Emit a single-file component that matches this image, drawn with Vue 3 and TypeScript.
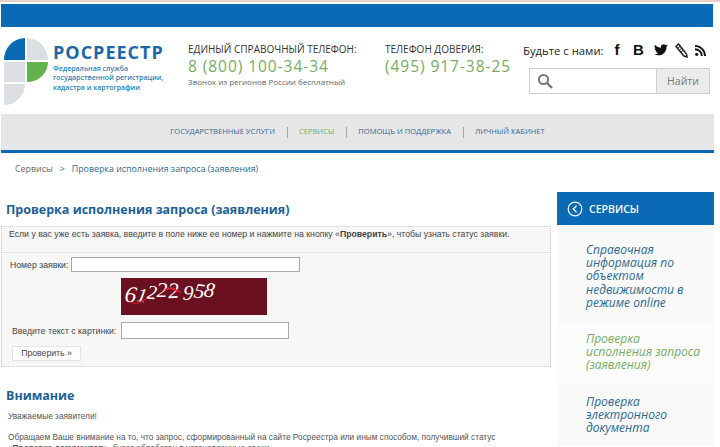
<template>
  <div class="page">
    <div class="top-line"></div>
    <div class="top-bar"></div>

    <header class="header">
      <div class="logo">
        <svg class="logo-mark" width="44" height="67" viewBox="0 0 44 67">
          <path d="M0 22 A21 22 0 0 1 21 0 V22 Z" fill="#0b6ab5" />
          <path d="M23 0 A21 22 0 0 1 44 22 H23 Z" fill="#dcdfe2" />
          <rect x="0" y="24" width="21" height="20" fill="#dcdfe2" />
          <path d="M23 24 H44 A21 20 0 0 1 23 44 Z" fill="#62b34d" />
          <path d="M0 46 H21 A21 21 0 0 1 0 67 Z" fill="#dcdfe2" />
        </svg>
        <div class="logo-text">
          <div class="logo-name">РОСРЕЕСТР</div>
          <div class="logo-sub">Федеральная служба<br />государственной регистрации,<br />кадастра и картографии</div>
        </div>
      </div>

      <div class="phone phone-main">
        <div class="phone-title">ЕДИНЫЙ СПРАВОЧНЫЙ ТЕЛЕФОН:</div>
        <div class="phone-num">8 (800) 100-34-34</div>
        <div class="phone-note">Звонок из регионов России бесплатный</div>
      </div>

      <div class="phone phone-trust">
        <div class="phone-title">ТЕЛЕФОН ДОВЕРИЯ:</div>
        <div class="phone-num">(495) 917-38-25</div>
      </div>

      <div class="header-right">
        <div class="social">
          <span class="social-label">Будьте с нами:</span>
          <span class="soc-letter soc-f">f</span>
          <span class="soc-letter soc-b">B</span>
          <svg width="14" height="12" viewBox="0 0 24 20">
            <path d="M24 2.4c-.9.4-1.8.7-2.8.8 1-.6 1.8-1.6 2.2-2.7-1 .6-2 1-3.100 1.200C19.300.7 18 0 16.600 0c-2.700 0-4.900 2.200-4.900 4.900 0 .4 0 .8.100 1.100C7.700 5.800 4.100 3.900 1.700.9c-.4.700-.7 1.600-.7 2.500 0 1.700.9 3.200 2.200 4.100-.8 0-1.600-.2-2.200-.6v.1c0 2.400 1.700 4.400 3.900 4.800-.4.100-.8.200-1.300.2-.3 0-.6 0-.9-.1.600 2 2.400 3.400 4.600 3.400-1.700 1.300-3.800 2.100-6.100 2.100-.4 0-.8 0-1.200-.1C2.200 18.300 4.800 19.100 7.500 19.100c9.100 0 14-7.500 14-14v-.6c1-.7 1.800-1.500 2.500-2.100z" fill="#111" />
          </svg>
          <svg width="13" height="15" viewBox="0 0 13 15">
            <path d="M1 3.500 3.500 1 11.500 11 12 14 9 13Z" fill="none" stroke="#222" stroke-width="1.500" />
            <path d="M3 5 5.500 3M4.500 7 7 5M6 9 8.500 7" stroke="#222" stroke-width="1" />
          </svg>
          <svg width="11" height="11" viewBox="0 0 11 11">
            <circle cx="1.700" cy="9.300" r="1.600" fill="#111" />
            <path d="M0 4.200A6.800 6.800 0 0 1 6.800 11M0 .9A10.100 10.100 0 0 1 10.100 11" fill="none" stroke="#111" stroke-width="1.900" />
          </svg>
        </div>
        <div class="search">
          <div class="search-field">
            <svg width="16" height="16" viewBox="0 0 16 16">
              <circle cx="6.500" cy="6.500" r="4.600" fill="none" stroke="#777" stroke-width="2" />
              <path d="M10 10 15 15" stroke="#777" stroke-width="2.400" />
            </svg>
          </div>
          <div class="search-btn">Найти</div>
        </div>
      </div>
    </header>

    <nav class="nav">
      <a class="nav-link">ГОСУДАРСТВЕННЫЕ УСЛУГИ</a>
      <span class="nav-sep"></span>
      <a class="nav-link nav-active">СЕРВИСЫ</a>
      <span class="nav-sep"></span>
      <a class="nav-link">ПОМОЩЬ И ПОДДЕРЖКА</a>
      <span class="nav-sep"></span>
      <a class="nav-link">ЛИЧНЫЙ КАБИНЕТ</a>
    </nav>

    <div class="crumbs">
      <span class="crumb-root">Сервисы</span>
      <span class="crumb-arrow">&gt;</span>
      <span class="crumb-cur">Проверка исполнения запроса (заявления)</span>
    </div>

    <div class="columns">
      <main class="content">
        <h1 class="title">Проверка исполнения запроса (заявления)</h1>
        <div class="form-box">
          <div class="form-hint">
            Если у вас уже есть заявка, введите в поле ниже ее номер и нажмите на кнопку «<b>Проверить</b>», чтобы узнать статус заявки.
          </div>
          <div class="form-body">
            <div class="row row-num">
              <label class="lbl">Номер заявки:</label>
              <div class="inp inp-num"></div>
            </div>
            <div class="captcha">
              <span v-for="d in digits" :key="d.id" class="digit" :style="{ transform: `translateY(${d.y}px) rotate(${d.r}deg)`, fontSize: d.s + 'px' }">{{ d.c }}</span>
              <svg class="captcha-noise" width="146" height="37" viewBox="0 0 146 37">
                <path d="M44 12 Q50 8 56 13 L60 14" fill="none" stroke="#e0202c" stroke-width="1.800" />
                <path d="M8 24 Q16 28 26 20" fill="none" stroke="#c4182a" stroke-width="1.200" />
              </svg>
            </div>
            <div class="row row-code">
              <label class="lbl">Введите текст с картинки:</label>
              <div class="inp inp-code"></div>
            </div>
            <div class="check-btn">Проверить »</div>
          </div>
        </div>

        <h2 class="title title-sm">Внимание</h2>
        <p class="txt">Уважаемые заявители!</p>
        <p class="txt">Обращаем Ваше внимание на то, что запрос, сформированный на сайте Росреестра или иным способом, получивший статус<br /><b>«Проверка документов»</b>, будет обработан в установленные сроки.</p>
      </main>

      <aside class="side">
        <div class="side-head">
          <svg width="16" height="16" viewBox="0 0 16 16">
            <circle cx="8" cy="8" r="6.800" fill="none" stroke="#fff" stroke-width="1.200" />
            <path d="M9.500 4.800 6.300 8 9.500 11.200" fill="none" stroke="#fff" stroke-width="1.400" />
          </svg>
          <span>СЕРВИСЫ</span>
        </div>
        <a class="side-item side-1">Справочная информация по объектом недвижимости в режиме online</a>
        <a class="side-item side-2 side-active">Проверка исполнения запроса (заявления)</a>
        <a class="side-item side-3">Проверка электронного документа</a>
      </aside>
    </div>
  </div>
</template>

<script setup lang="ts">
interface Digit {
  id: number;
  c: string;
  y: number;
  r: number;
  s: number;
}

const digits: Digit[] = [
  { id: 1, c: "6", y: 2, r: 8, s: 23 },
  { id: 2, c: "1", y: 3, r: 10, s: 20 },
  { id: 3, c: "2", y: 0, r: 6, s: 20 },
  { id: 4, c: "2", y: -3, r: 0, s: 22 },
  { id: 5, c: "2", y: -2, r: -4, s: 22 },
  { id: 6, c: " ", y: 0, r: 0, s: 18 },
  { id: 7, c: "9", y: 1, r: 4, s: 21 },
  { id: 8, c: "5", y: -1, r: 8, s: 21 },
  { id: 9, c: "8", y: -2, r: 8, s: 21 },
];
</script>

<style>
html,
body {
  margin: 0;
  background: #fff;
  overflow: hidden;
}
</style>

<style scoped>
.page {
  width: 720px;
  height: 447px;
  overflow: hidden;
  background: #fff;
  font-family: "Open Sans", sans-serif;
  color: #444;
}

.top-line {
  height: 2px;
  background: #e9cfc9;
  margin-bottom: 2px;
}

.top-bar {
  height: 23px;
  margin: 0 7px 0 1px;
  background: #0b6ab5;
}

.header {
  display: flex;
  height: 87px;
  width: 714px;
}

.logo {
  display: flex;
  width: 188px;
  padding: 11px 0 0 4px;
  box-sizing: border-box;
}

.logo-mark {
  flex: none;
}

.logo-text {
  margin-left: 5px;
}

.logo-name {
  margin-top: 3px;
  font-size: 18px;
  line-height: 22px;
  font-weight: 700;
  letter-spacing: 1px;
  color: #1a68a8;
}

.logo-sub {
  margin-top: 1px;
  font-size: 7px;
  line-height: 9.300px;
  font-weight: 600;
  color: #2d7fb5;
  white-space: nowrap;
}

.phone {
  padding-top: 15px;
}

.phone-main {
  width: 197px;
}

.phone-trust {
  width: 138px;
}

.phone-title {
  font-size: 10px;
  line-height: 14px;
  color: #333;
  white-space: nowrap;
}

.phone-num {
  font-size: 15.500px;
  line-height: 21px;
  letter-spacing: 0.950px;
  color: #74ad63;
  white-space: nowrap;
}

.phone-note {
  margin-top: -1px;
  font-size: 8px;
  line-height: 11px;
  color: #666;
  white-space: nowrap;
}

.header-right {
  width: 191px;
  padding-top: 14px;
}

.social {
  display: flex;
  align-items: center;
  height: 18px;
  color: #222;
}

.social-label {
  font-size: 11.300px;
  margin-right: 4px;
  white-space: nowrap;
}

.soc-letter {
  font-family: "Liberation Sans", sans-serif;
  font-weight: 700;
  color: #111;
  font-size: 15px;
  line-height: 18px;
}

.soc-f {
  width: 19px;
  text-align: center;
}

.soc-b {
  width: 24px;
  margin-right: 3px;
  text-align: center;
}

.social svg {
  margin-right: 7px;
}

.search {
  display: flex;
  width: 181px;
  height: 26px;
  margin: 9px 0 0 6px;
  box-sizing: border-box;
  border: 1px solid #cfcfcf;
}

.search-field {
  width: 127px;
  display: flex;
  align-items: center;
  padding-left: 7px;
  box-sizing: border-box;
  border-right: 1px solid #cfcfcf;
  background: #fff;
}

.search-btn {
  flex: 1;
  background: #ebebeb;
  color: #777;
  font-size: 10.500px;
  line-height: 24px;
  text-align: center;
}

.nav {
  display: flex;
  align-items: center;
  justify-content: center;
  width: 713px;
  height: 36px;
  margin-left: 1px;
  background: #e6e6e6;
  border-bottom: 3px solid #0b6ab5;
}

.nav-link {
  margin-top: -2px;
  font-size: 7.570px;
  color: #33679a;
  white-space: nowrap;
}

.nav-active {
  color: #74ad63;
}

.nav-sep {
  width: 1px;
  height: 11px;
  margin: 0 11px 0 12px;
  background: #a5a5a5;
}

.crumbs {
  height: 38px;
  padding-left: 15px;
  font-size: 8.850px;
  line-height: 32px;
  color: #666;
  white-space: nowrap;
}

.crumb-arrow {
  margin: 0 7px;
  color: #2a6a96;
}

.crumb-cur {
  color: #2a6a96;
}

.columns {
  display: flex;
  width: 714px;
}

.content {
  width: 550px;
  margin-left: 1px;
  margin-right: 6px;
}

.title {
  margin: 0;
  padding-left: 5px;
  font-size: 12.500px;
  line-height: 20px;
  font-weight: 700;
  color: #1c5f96;
  white-space: nowrap;
}

.content > .title:first-child {
  margin-top: 9px;
}

.form-box {
  box-sizing: border-box;
  height: 141px;
  margin-top: 6px;
  border: 1px dotted #cccccc;
  background: #f7f7f7;
  font-family: "Liberation Sans", sans-serif;
  font-size: 8.700px;
  color: #444;
}

.form-hint {
  height: 26px;
  padding: 1px 0 0 7px;
  box-sizing: border-box;
  line-height: 13px;
  border-bottom: 1px solid #e6e6e6;
  white-space: nowrap;
}

.form-body {
  padding-top: 4px;
}

.row {
  display: flex;
  align-items: center;
}

.row-num {
  padding-left: 8px;
}

.row-code {
  padding-left: 10px;
  margin-top: 7px;
}

.lbl {
  white-space: nowrap;
}

.inp {
  box-sizing: border-box;
  background: #fff;
  border: 1px solid #a9a9a9;
}

.inp-num {
  width: 229px;
  height: 15px;
  margin-left: 3px;
}

.inp-code {
  width: 168px;
  height: 17px;
  margin-left: 5px;
}

.captcha {
  position: relative;
  display: flex;
  align-items: center;
  box-sizing: border-box;
  width: 146px;
  height: 37px;
  margin: 6px 0 0 119px;
  padding: 0 0 8px 4px;
  background: #6a1020;
  color: #fff;
  font-family: "Liberation Serif", serif;
  font-style: italic;
  white-space: pre;
}

.captcha-noise {
  position: absolute;
  top: 0;
  left: 0;
}

.digit {
  display: inline-block;
}

.check-btn {
  width: 69px;
  height: 15px;
  margin: 7px 0 0 10px;
  background: #fff;
  border: 1px solid #e4e4e4;
  box-sizing: border-box;
  font-size: 8.700px;
  line-height: 13px;
  text-align: center;
  color: #444;
}

.title-sm {
  margin-top: 19px;
}

.txt {
  margin: 5px 0 10px 7px;
  font-family: "Liberation Sans", sans-serif;
  font-size: 8.300px;
  line-height: 11px;
  color: #555;
}

.side {
  width: 157px;
  margin-top: 1px;
}

.side-head {
  display: flex;
  align-items: center;
  height: 33px;
  padding-left: 10px;
  background: #0b6ab5;
  color: #fff;
  font-size: 10.500px;
  font-weight: 600;
}

.side-head span {
  margin-left: 6px;
}

.side-item {
  display: block;
  box-sizing: border-box;
  padding: 18px 10px 0 29px;
  font-size: 12px;
  line-height: 13.200px;
  font-style: italic;
  color: #2b6a93;
  background: #f9f9f9;
}

.side-1 {
  height: 100px;
}

.side-2 {
  height: 60px;
  background: #fcfcfc;
  padding-top: 7px;
}

.side-3 {
  height: 61px;
  padding-top: 10px;
}

.side-active {
  color: #74ad63;
}
</style>
